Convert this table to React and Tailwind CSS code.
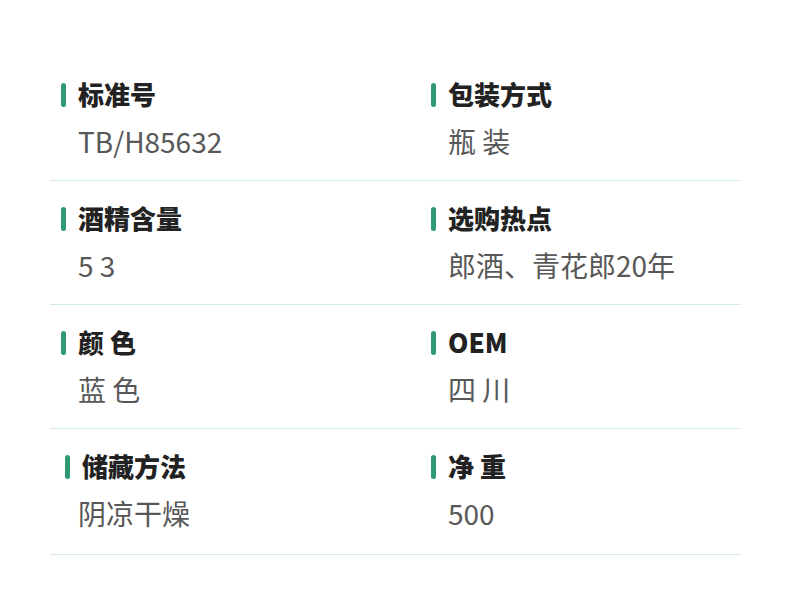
const specs = [
  { label: '标准号', value: 'TB/H85632' },
  { label: '包装方式', value: '瓶 装' },
  { label: '酒精含量', value: '5 3' },
  { label: '选购热点', value: '郎酒、青花郎20年' },
  { label: '颜 色', value: '蓝 色' },
  { label: 'OEM', value: '四 川' },
  { label: '储藏方法', value: '阴凉干燥', last: true, shift: true },
  { label: '净 重', value: '500', last: true },
];

function SpecItem({ label, value, last, shift }) {
  return (
    <div
      className={`border-b border-[#d3ebe4] px-[11px] pt-[23px] ${last ? 'pb-[23px]' : 'pb-[21px]'}`}
    >
      <div className={`flex items-center gap-3 h-[30px] ${shift ? 'pl-1' : ''}`}>
        <span className="w-[5px] h-6 rounded-full bg-[#2f9a72]" />
        <span className="-mt-1 text-[26px] font-black text-[#222]">{label}</span>
      </div>
      <div className="mt-[13px] h-9 leading-9 pl-[17px] text-[28px] text-[#585858]">{value}</div>
    </div>
  );
}

export default function App() {
  return (
    <div
      className="w-[790px] h-[600px] bg-white pt-[57px] px-[50px]"
      style={{ fontFamily: '"Noto Sans CJK SC", "Noto Sans", sans-serif' }}
    >
      <div className="grid grid-cols-[370px_1fr] w-[691px]">
        {specs.map((s) => (
          <SpecItem key={s.label} {...s} />
        ))}
      </div>
    </div>
  );
}
